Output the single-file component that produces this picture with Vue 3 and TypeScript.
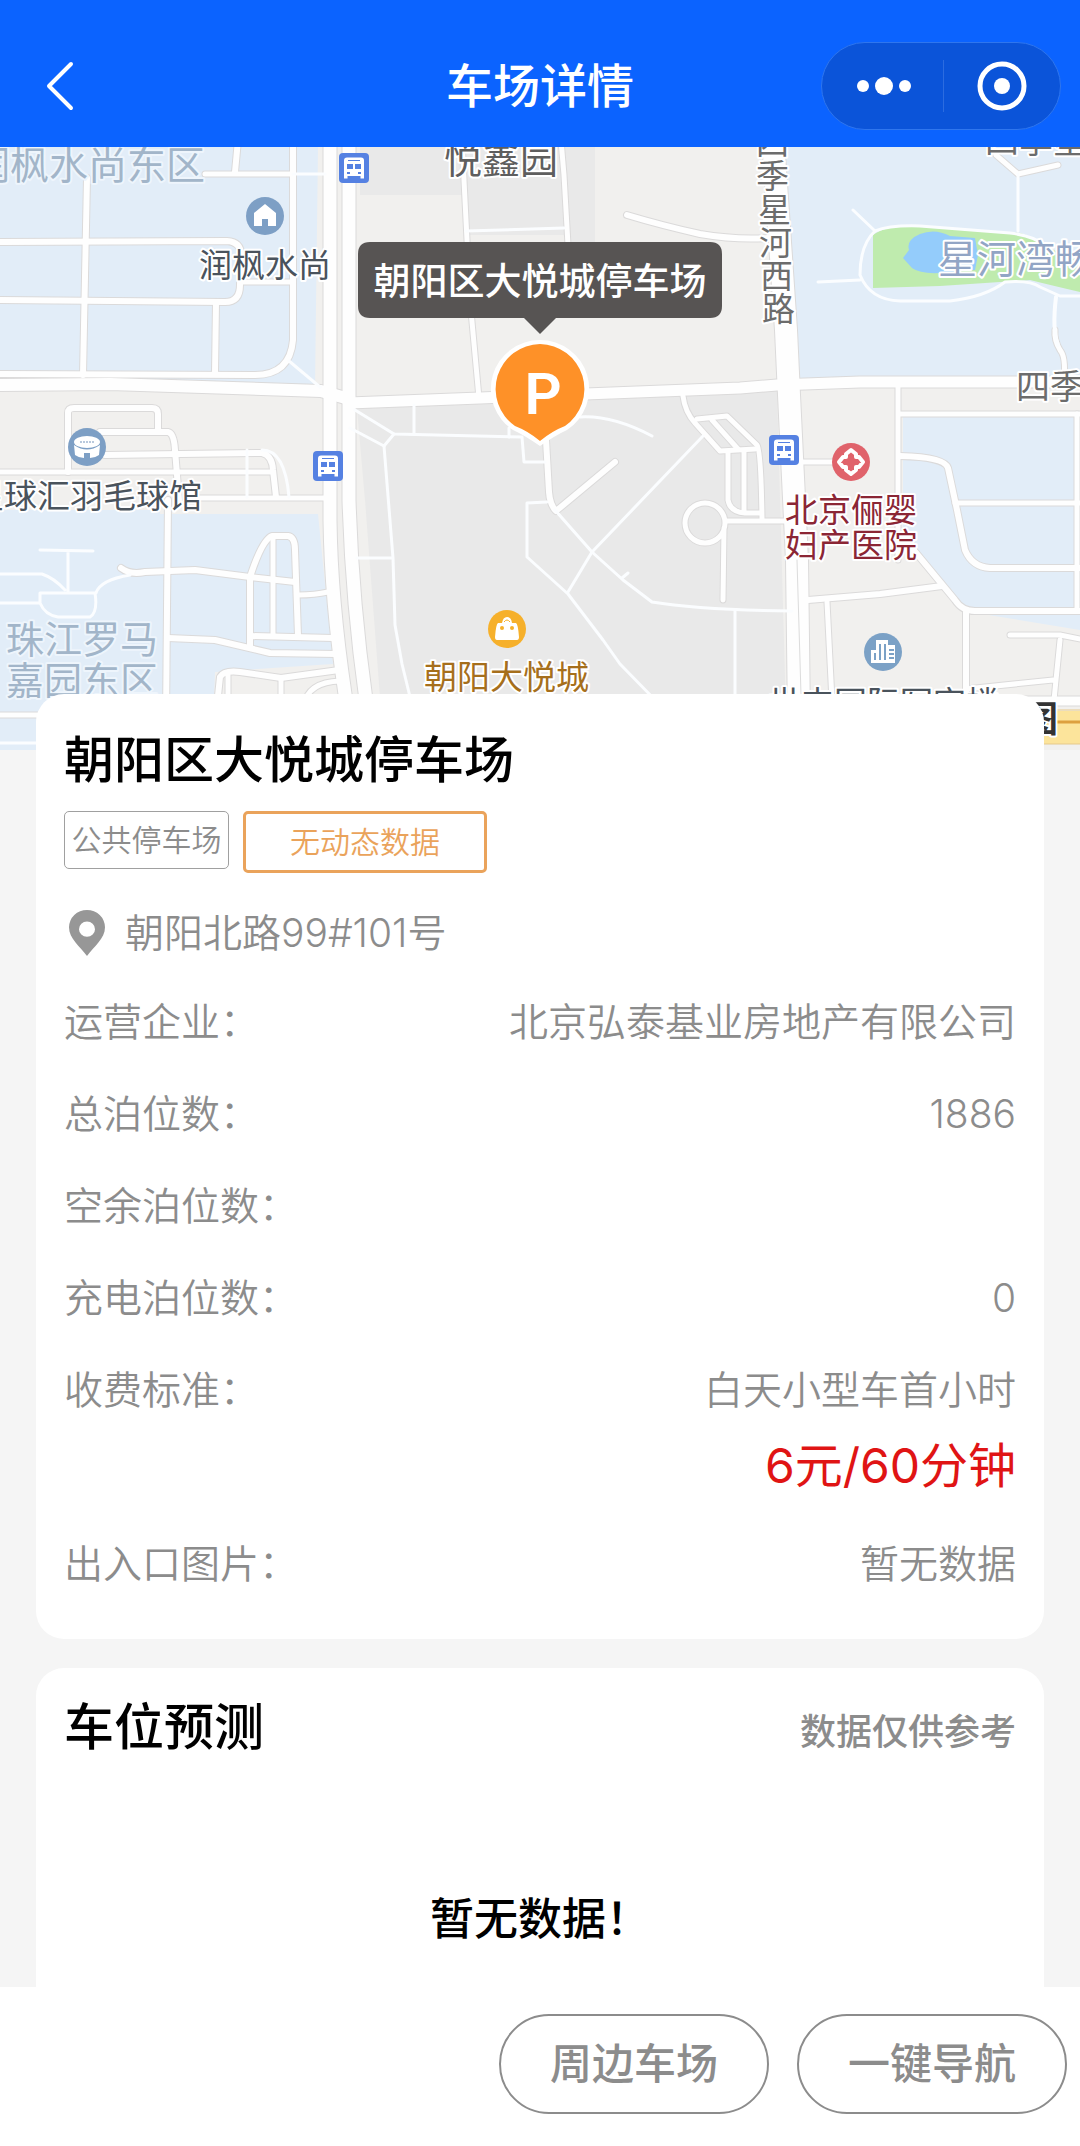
<script setup lang="ts">
interface Road {
  d: string
  w: number
}

interface MapLabel {
  text: string
  x: string
  y: string
  size: number
  tone: string
}

interface InfoRow {
  label: string
  value: string
  price?: string
}

const lotName = '朝阳区大悦城停车场'

const rows: InfoRow[] = [
  { label: '运营企业：', value: '北京弘泰基业房地产有限公司' },
  { label: '总泊位数：', value: '1886' },
  { label: '空余泊位数：', value: '' },
  { label: '充电泊位数：', value: '0' },
  { label: '收费标准：', value: '白天小型车首小时', price: '6元/60分钟' },
  { label: '出入口图片：', value: '暂无数据' },
]

// Streets with a grey casing
const roads: Road[] = [
  { d: 'M330 140V520Q331 600 345 694L350 730', w: 13 },
  { d: 'M349 140V440L349 500Q352 600 366 700L370 730', w: 13 },
  { d: 'M-5 385L110 384L321 391L349 399', w: 12 },
  { d: 'M349 403L480 398L740 388L777 385L860 382H1085', w: 11 },
  { d: 'M773 140L786 330L789 395L797 560L799 720', w: 22 },
  { d: 'M87 178L83 375', w: 6 },
  { d: 'M-5 242L227 241Q241 242 241 255L240 285Q240 302 225 302L-5 300', w: 6 },
  { d: 'M216 302L215 374', w: 6 },
  { d: 'M293 140V340Q290 375 255 375L-5 374', w: 6 },
  { d: 'M240 282L293 282', w: 5 },
  { d: 'M205 174H293', w: 5 },
  { d: 'M238 140L235 172', w: 6 },
  { d: 'M68 472V413Q68 408 74 408H152Q158 408 158 414V432', w: 6 },
  { d: 'M100 432H168Q174 433 175 450L179 500', w: 6 },
  { d: 'M-5 472H273', w: 5 },
  { d: 'M105 455L262 453Q272 455 273 470L276 497', w: 6 },
  { d: 'M195 498H325', w: 5 },
  { d: 'M168 500L166 720', w: 6 },
  { d: 'M121 568Q130 575 145 572L195 570L250 577L295 582', w: 6 },
  { d: 'M250 646V577Q262 540 272 536H288Q295 537 295 550L298 636', w: 6 },
  { d: 'M273 538V636', w: 5 },
  { d: 'M250 636L333 638', w: 6 },
  { d: 'M298 595Q315 595 328 592', w: 5 },
  { d: 'M168 638L215 640L270 653L337 654', w: 6 },
  { d: 'M217 705L220 677Q224 670 240 672L281 678L339 670', w: 6 },
  { d: 'M228 675V705M281 678V705M304 705Q308 682 340 681', w: 5 },
  { d: 'M-5 715H60', w: 5 },
  { d: 'M462 140L464 180L470 300L479 398', w: 5 },
  { d: 'M561 140L564 175L568 245', w: 5 },
  { d: 'M627 215Q660 225 700 234Q735 240 768 238', w: 6 },
  { d: 'M546 440L549 492Q550 505 556 511L615 462', w: 6 },
  { d: 'M683 396Q685 412 695 423L720 451L755 449', w: 5 },
  { d: 'M697 419L727 416L757 445Q761 450 762 519', w: 5 },
  { d: 'M712 420L738 449M728 452V500Q730 512 745 513H760M744 452V512', w: 5 },
  { d: 'M685 523A20 20 0 1 0 725 523A20 20 0 1 0 685 523M724 528L723 600M725 521H790', w: 5 },
  { d: 'M996 155L1018 174L1058 165', w: 5 },
  { d: 'M1055 330Q1054 340 1060 350Q1066 357 1064 378', w: 5 },
  { d: 'M898 388V560M898 414H1085', w: 5 },
  { d: 'M900 456Q945 457 948 468L957 510L965 550Q972 567 990 568H1085', w: 6 },
  { d: 'M955 503H1085M1077 414V610', w: 5 },
  { d: 'M912 548L955 600Q962 611 975 611H1085', w: 6 },
  { d: 'M808 600L880 594L942 586M966 612V720', w: 6 },
  { d: 'M827 602L833 720M802 462H850', w: 5 },
  { d: 'M1010 635H1060L1085 640M1060 640L1054 700M966 689L1053 680', w: 5 },
  { d: 'M1000 701H1085', w: 9 },
]

// Footpaths and inner lanes, no casing
const lanes: Road[] = [
  { d: 'M289 361L320 387M293 174H325', w: 3 },
  { d: 'M247 450V497M262 450Q285 450 289 497', w: 3 },
  { d: 'M-5 574H42Q54 578 65 590M40 550L93 551M68 551V592', w: 3 },
  { d: 'M40 593H95Q98 612 90 617H58Q45 615 40 603V593M-5 603H40M96 593Q100 580 130 575', w: 3 },
  { d: 'M-5 743H60', w: 3 },
  { d: 'M355 410L394 434L522 437L524 462H545', w: 3 },
  { d: 'M350 428L384 446L394 434M414 405V434M509 437V428', w: 3 },
  { d: 'M384 446L393 558L395 625L402 664L412 705M357 558H393', w: 3 },
  { d: 'M547 502L527 503V557L568 594L603 640L620 664L660 705', w: 3 },
  { d: 'M555 510L592 552L623 580L652 602Q700 610 792 611', w: 3 },
  { d: 'M703 436L592 552L568 592M622 578L628 573M735 611V705', w: 3 },
  { d: 'M580 417Q612 415 652 436M466 231L564 228', w: 3 },
  { d: 'M853 210L875 231M818 282L860 280M1018 231V174', w: 3 },
  { d: 'M875 231Q860 245 860 275Q870 300 900 301H950Q985 297 1005 282Q1030 280 1040 287L1060 296H1085', w: 3 },
  { d: 'M875 231Q890 225 920 226L1010 233Q1035 236 1045 246', w: 3 },
  { d: 'M1056 297Q1052 330 1058 345', w: 4 },
]

const labels: MapLabel[] = [
  { text: '润枫水尚东区', x: '-29', y: '179', size: 39, tone: 'estate' },
  { text: '悦鑫园', x: '444', y: '173', size: 38, tone: 'place' },
  { text: '润枫水尚', x: '199', y: '277', size: 33, tone: 'poi' },
  { text: '四季星河西路', x: '756 756 758 759 760 762', y: '155 188 222 255 288 321', size: 33, tone: 'road' },
  { text: '四季星河', x: '985', y: '153', size: 34, tone: 'road' },
  { text: '星河湾畅园', x: '938', y: '273', size: 39, tone: 'park' },
  { text: '四季星河', x: '1016', y: '399', size: 34, tone: 'road' },
  { text: '星球汇羽毛球馆', x: '-29', y: '508', size: 33, tone: 'poi' },
  { text: '珠江罗马', x: '6', y: '653', size: 38, tone: 'estate' },
  { text: '嘉园东区', x: '6', y: '694', size: 38, tone: 'estate' },
  { text: '朝阳大悦城', x: '424', y: '689', size: 33, tone: 'mall' },
  { text: '北京俪婴', x: '785', y: '522', size: 33, tone: 'clinic' },
  { text: '妇产医院', x: '785', y: '557', size: 33, tone: 'clinic' },
  { text: '世丰国际写字楼', x: '768', y: '715', size: 33, tone: 'poi' },
  { text: '图', x: '1022', y: '732', size: 36, tone: 'brand' },
]

const stops = [
  { x: 339, y: 153 },
  { x: 313, y: 451 },
  { x: 769, y: 435 },
]
</script>

<template>
  <div class="page">
    <header class="topbar">
      <button class="back" type="button" aria-label="返回">
        <svg width="30" height="52" viewBox="0 0 30 52"><path d="M27 4L5 26L27 48" fill="none" stroke="#fff" stroke-width="4" stroke-linecap="round" stroke-linejoin="round" /></svg>
      </button>
      <h1>车场详情</h1>
      <div class="capsule">
        <button type="button" aria-label="更多">
          <svg width="60" height="24" viewBox="0 0 60 24" fill="#fff"><circle cx="9" cy="12" r="6" /><circle cx="30" cy="12" r="9" /><circle cx="51" cy="12" r="6" /></svg>
        </button>
        <span class="divider"></span>
        <button type="button" aria-label="关闭">
          <svg width="52" height="52" viewBox="0 0 52 52"><circle cx="26" cy="26" r="22" fill="none" stroke="#fff" stroke-width="5" /><circle cx="26" cy="26" r="8" fill="#fff" /></svg>
        </button>
      </div>
    </header>

    <svg class="map" viewBox="0 147 1080 603" preserveAspectRatio="xMidYMid slice" role="img" aria-label="地图">
      <rect x="0" y="147" width="1080" height="603" fill="#f1f0ee" />
      <g fill="#e2edf8">
        <path d="M0 147H318L315 388L250 385L0 380Z" />
        <path d="M0 510H160V514H318L333 664L215 672L212 750H0Z" />
        <path d="M785 147H1080V380H799Z" />
        <path d="M903 417H1080V630L970 612L917 553L903 540Z" />
      </g>
      <g fill="#e9e9e9">
        <path d="M360 147H595V300H570L565 235H470L466 195H360Z" />
        <path d="M357 408L777 390L787 750H384L365 500Z" />
      </g>
      <path d="M873 288V235Q885 226 910 226L1020 233Q1035 237 1045 246L1080 262V292Q1050 285 1030 280L1000 282L940 286Z" fill="#bfebae" />
      <path d="M903 258L909 250Q906 240 920 234Q935 228 950 236L975 238L978 255L975 270L940 273Q920 274 912 268Z" fill="#94ccfb" />

      <g fill="none" stroke-linecap="round" stroke-linejoin="round">
        <path v-for="(r, i) in roads" :key="'c' + i" :d="r.d" :stroke-width="r.w + 2" stroke="#dbdada" />
        <path v-for="(r, i) in roads" :key="'r' + i" :d="r.d" :stroke-width="r.w" stroke="#fefefe" />
        <path v-for="(r, i) in lanes" :key="'l' + i" :d="r.d" :stroke-width="r.w" stroke="#fbfdff" />
        <path d="M797 560L801 694" stroke="#dcdcdc" />
      </g>
      <rect x="1030" y="711" width="50" height="33" fill="#fce49b" />
      <path d="M1030 710H1080M1030 744H1080" stroke="#e6c98b" />
      <path d="M1030 722H1080" stroke="#dda03f" stroke-width="3" />

      <text v-for="(l, i) in labels" :key="'t' + i" :x="l.x" :y="l.y" :font-size="l.size" :class="['label', l.tone]">{{ l.text }}</text>

      <g v-for="(s, i) in stops" :key="'s' + i" :transform="`translate(${s.x} ${s.y})`">
        <rect width="30" height="30" rx="4" fill="#5581e2" />
        <path d="M8 4.500H22Q25 4.500 25 7.500V25.500H21.500V23H8.500V25.500H5V7.500Q5 4.500 8 4.500Z" fill="#fff" />
        <path d="M9 7.500H21" stroke="#5581e2" />
        <path d="M8 11H14V16H8ZM16 11H22V16H16ZM8 19H11V21H8ZM19 19H22V21H19Z" fill="#5581e2" />
      </g>

      <g transform="translate(265 216)">
        <circle r="19" fill="#7d9fc5" />
        <path d="M0 -12L11 -3V10H3V3H-3V10H-11V-3Z" fill="#fff" />
      </g>
      <g transform="translate(87 447)">
        <circle r="19" fill="#7d9fc5" />
        <ellipse cy="-5" rx="13" ry="6" fill="#fff" />
        <path d="M-13 -2Q0 7 13 -2L12 8Q8 11 3 11V6H-3V11Q-8 11 -12 8Z" fill="#fff" />
        <path d="M-7 -5H7" stroke="#b9c9dd" stroke-width="2" stroke-dasharray="2 1" />
      </g>
      <g transform="translate(851 462)">
        <circle r="19" fill="#e0636b" />
        <path d="M-5 -8L0 -12L5 -8V-5H8L12 0L8 5H5V8L0 12L-5 8V5H-8L-12 0L-8 -5H-5Z" fill="#e0636b" stroke="#fff" stroke-width="4" stroke-linejoin="round" />
      </g>
      <g transform="translate(507 629)">
        <circle r="19" fill="#f6b02b" />
        <path d="M-9 -6H-5Q-4 -12 0 -12Q4 -12 5 -6H9Q11 -5 12 8Q12 11 10 11H-10Q-12 11 -12 8Q-11 -5 -9 -6Z" fill="#fff" />
        <path d="M-3 -7Q0 -11 3 -7" fill="none" stroke="#f6b02b" stroke-width="1" />
        <circle cx="-5" cy="-1" r="2" fill="#f6b02b" />
        <circle cx="5" cy="-1" r="2" fill="#f6b02b" />
      </g>
      <g transform="translate(883 652)">
        <circle r="19" fill="#7ba1c6" />
        <path d="M-12 11V-2H-7V-12H5V-7H12V11Z" fill="#fff" />
        <path d="M-8 1V8M-3 -8V8M2 -8V8M6 -2H11M6 2H11M6 6H11" stroke="#7ba1c6" stroke-width="2" />
      </g>

      <path d="M540 340A49 49 0 0 1 567 430Q556 435 540 446Q524 435 513 430A49 49 0 0 1 540 340Z" fill="#fff" />
      <path d="M540 344A45 45 0 0 1 565 426Q552 431 540 441Q528 431 515 426A45 45 0 0 1 540 344Z" fill="#fe9128" />
      <text x="543" y="414" font-size="58" class="pin">P</text>

      <path d="M370 242H710Q722 242 722 254V306Q722 318 710 318H556L540 334L524 318H370Q358 318 358 306V254Q358 242 370 242Z" fill="#575453" />
      <text x="540" y="295" font-size="37" class="callout">{{ lotName }}</text>
    </svg>

    <main>
      <section class="card detail">
        <h2>{{ lotName }}</h2>
        <div class="tags">
          <span class="tag">公共停车场</span>
          <span class="tag warn">无动态数据</span>
        </div>
        <p class="address">
          <svg width="36" height="46" viewBox="0 0 36 48" preserveAspectRatio="none"><path d="M18 0A18 18 0 0 1 36 18C36 30 25 38 18 48C11 38 0 30 0 18A18 18 0 0 1 18 0ZM18 12A8 8 0 1 0 18 28A8 8 0 1 0 18 12Z" fill="#979797" /></svg>
          <span>朝阳北路99#101号</span>
        </p>
        <dl>
          <div v-for="row in rows" :key="row.label" class="row">
            <dt>{{ row.label }}</dt>
            <dd>
              {{ row.value }}
              <strong v-if="row.price" class="price">{{ row.price }}</strong>
            </dd>
          </div>
        </dl>
      </section>

      <section class="card forecast">
        <div class="heading">
          <h2>车位预测</h2>
          <span>数据仅供参考</span>
        </div>
        <p class="empty">暂无数据！</p>
      </section>
    </main>

    <footer class="actions">
      <button type="button">周边车场</button>
      <button type="button">一键导航</button>
    </footer>
  </div>
</template>

<style>
body {
  margin: 0;
  background: #f5f5f5;
}
</style>

<style scoped>
.page {
  display: flex;
  flex-direction: column;
  min-height: 100vh;
  background: #f5f5f5;
  color: #8c8c8c;
  font-family: Inter, "Noto Sans CJK SC", sans-serif;
  font-size: 39px;
  line-height: 52px;
}

h1,
h2,
p,
dl,
dd {
  margin: 0;
}

button {
  padding: 0;
  border: 0;
  background: none;
  font: inherit;
  color: inherit;
  cursor: pointer;
}

button svg {
  display: block;
}

.topbar {
  display: grid;
  grid-template-columns: 1fr auto 1fr;
  align-items: center;
  padding: 42px 19px 17px;
  background: #0b63ff;
  color: #fff;
}

.back {
  justify-self: start;
  padding: 0 25px;
}

.topbar h1 {
  font-size: 47px;
  font-weight: 500;
  line-height: 56px;
}

.capsule {
  display: flex;
  align-items: center;
  justify-self: end;
  box-sizing: border-box;
  width: 240px;
  height: 88px;
  padding-left: 4px;
  border: 1px solid #2f76ee;
  border-radius: 44px;
  background: #0b54d9;
}

.capsule button {
  display: flex;
  flex: 1;
  justify-content: center;
}

.divider {
  width: 1px;
  height: 52px;
  background: #2c6ce0;
}

.map {
  display: block;
  width: 100%;
  height: 603px;
}

.label {
  stroke: #fff;
  stroke-width: 4px;
  stroke-linejoin: round;
  paint-order: stroke;
}

.estate {
  fill: #a2b5c9;
  stroke: #eef5fc;
}

.place {
  fill: #5e5e5e;
}

.poi {
  fill: #4a535c;
}

.road {
  fill: #6c6c6c;
}

.park {
  fill: #92a5c5;
}

.mall {
  fill: #a66f1c;
}

.clinic {
  fill: #8b2635;
}

.brand {
  fill: #333;
  font-weight: 700;
}

.pin {
  fill: #fff;
  font-family: Roboto, sans-serif;
  font-weight: 600;
  text-anchor: middle;
}

.callout {
  fill: #fff;
  font-weight: 500;
  text-anchor: middle;
}

main {
  position: relative;
  display: flex;
  flex: 1;
  flex-direction: column;
  gap: 29px;
  margin-top: -56px;
  padding: 0 36px;
}

.card {
  padding: 0 28px;
  border-radius: 28px;
  background: #fff;
}

.card h2 {
  color: #000;
  font-size: 50px;
  font-weight: 500;
  line-height: 60px;
}

.detail {
  padding-top: 36px;
  padding-bottom: 49px;
}

.tags {
  display: flex;
  align-items: flex-start;
  gap: 14px;
  margin-top: 21px;
  font-size: 30px;
  font-weight: 350;
}

.tag {
  box-sizing: border-box;
  width: 165px;
  border: 1px solid #a0a0a0;
  border-radius: 5px;
  line-height: 56px;
  text-align: center;
}

.warn {
  width: 244px;
  border: 3px solid #eaa35b;
  color: #eaa35b;
}

.address {
  display: flex;
  align-items: center;
  gap: 20px;
  margin: 34px 0 37px;
  padding-left: 5px;
  font-weight: 350;
}

dl {
  display: flex;
  flex-direction: column;
  gap: 40px;
  font-weight: 350;
}

.row {
  display: flex;
  justify-content: space-between;
}

dd {
  text-align: right;
}

.price {
  display: block;
  margin-top: 18px;
  color: #e01414;
  font-size: 48px;
  font-weight: 400;
  line-height: 64px;
}

.forecast {
  flex: 1;
  padding-top: 29px;
  border-radius: 28px 28px 0 0;
}

.heading {
  display: flex;
  align-items: baseline;
  justify-content: space-between;
  font-size: 36px;
  font-weight: 500;
}

.empty {
  margin-top: 131px;
  color: #000;
  font-size: 44px;
  font-weight: 500;
  line-height: 60px;
  text-align: center;
}

.actions {
  position: sticky;
  bottom: 0;
  display: flex;
  justify-content: flex-end;
  gap: 28px;
  padding: 27px 13px 32px;
  background: #fff;
}

.actions button {
  box-sizing: border-box;
  width: 270px;
  height: 100px;
  border: 2px solid #8c8c8c;
  border-radius: 50px;
  font-size: 42px;
  font-weight: 500;
}
</style>
